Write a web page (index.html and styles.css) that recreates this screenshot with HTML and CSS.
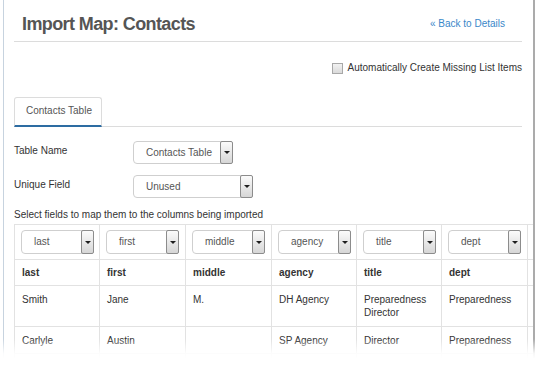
FILE: index.html
```html
<!DOCTYPE html>
<html>
<head>
<meta charset="utf-8">
<title>Import Map: Contacts</title>
<link rel="stylesheet" href="styles.css">
</head>
<body>
<div class="page">
  <div class="header">
    <h1 class="title">Import Map: Contacts</h1>
    <a class="back" href="#">« Back to Details</a>
  </div>
  <div class="options">
    <label class="check"><span class="box"></span>Automatically Create Missing List Items</label>
  </div>
  <div class="tabs"><div class="tab">Contacts Table</div></div>
  <div class="field first-field">
    <span class="label">Table Name</span>
    <div class="select w100"><span class="val">Contacts Table</span><span class="arrow"></span></div>
  </div>
  <div class="field second-field">
    <span class="label">Unique Field</span>
    <div class="select w120"><span class="val">Unused</span><span class="arrow"></span></div>
  </div>
  <div class="hint">Select fields to map them to the columns being imported</div>
  <div class="grid-wrap">
    <table class="grid">
      <colgroup>
        <col class="c85"><col class="c86"><col class="c86"><col class="c85"><col class="c85"><col class="c86"><col class="c86">
      </colgroup>
      <tr class="selrow">
        <td><div class="select cell-select"><span class="val">last</span><span class="arrow"></span></div></td>
        <td><div class="select cell-select"><span class="val">first</span><span class="arrow"></span></div></td>
        <td><div class="select cell-select"><span class="val">middle</span><span class="arrow"></span></div></td>
        <td><div class="select cell-select"><span class="val">agency</span><span class="arrow"></span></div></td>
        <td><div class="select cell-select"><span class="val">title</span><span class="arrow"></span></div></td>
        <td><div class="select cell-select"><span class="val">dept</span><span class="arrow"></span></div></td>
        <td></td>
      </tr>
      <tr class="headrow">
        <th>last</th><th>first</th><th>middle</th><th>agency</th><th>title</th><th>dept</th><th></th>
      </tr>
      <tr>
        <td>Smith</td><td>Jane</td><td>M.</td><td>DH Agency</td><td>Preparedness Director</td><td>Preparedness</td><td></td>
      </tr>
      <tr>
        <td>Carlyle</td><td>Austin</td><td></td><td>SP Agency</td><td>Director</td><td>Preparedness</td><td></td>
      </tr>
      <tr>
        <td>&nbsp;</td><td></td><td></td><td></td><td></td><td></td><td></td>
      </tr>
    </table>
  </div>
</div>
<div class="fade"></div>
</body>
</html>
```

FILE: styles.css
```css
html, body {
  margin: 0;
  padding: 0;
  background: #fff;
}
body {
  font-family: "Liberation Sans", Arial, sans-serif;
  font-size: 10px;
  color: #333;
  width: 536px;
  height: 365px;
  overflow: hidden;
  position: relative;
}
.page {
  box-sizing: border-box;
  margin-left: 3px;
  width: 532px;
  height: 365px;
  border-left: 1px solid #c7d3df;
  border-right: 2px solid #ababab;
  padding: 0 11px 0 10px;
  overflow: hidden;
}
.header {
  display: flex;
  justify-content: space-between;
  align-items: center;
  padding-top: 12px;
  padding-bottom: 5px;
  border-bottom: 1px solid #dcdcdc;
}
.title {
  margin: 0;
  padding-left: 8px;
  font-size: 18px;
  letter-spacing: -0.6px;
  line-height: 24px;
  font-weight: bold;
  color: #555;
}
.back {
  color: #3a87c9;
  text-decoration: none;
  line-height: 14px;
  margin-right: 17px;
}
.options {
  display: flex;
  justify-content: flex-end;
  margin-top: 19px;
}
.check {
  display: flex;
  align-items: center;
  gap: 4px;
  line-height: 14px;
}
.box {
  width: 9px;
  height: 9px;
  border: 1px solid #a8a8a8;
  background: linear-gradient(#f2f2f2, #dadada);
}
.tabs {
  display: flex;
  margin-top: 22px;
  border-bottom: 1px solid #dcdcdc;
}
.tab {
  margin-bottom: -1px;
  padding: 6px 9px 7px 11px;
  border: 1px solid #dcdcdc;
  border-bottom: 2px solid #2d6ca2;
  border-radius: 3px 3px 0 0;
  color: #555;
  line-height: 14px;
}
.field {
  display: flex;
  align-items: flex-start;
}
.first-field { margin-top: 14px; }
.second-field { margin-top: 11px; }
.label {
  width: 119px;
  padding-top: 3px;
  line-height: 14px;
  color: #333;
}
.select {
  box-sizing: border-box;
  display: flex;
  align-items: stretch;
  height: 23px;
  border: 1px solid #cfcfcf;
  border-radius: 4px;
  background: #fff;
  color: #555;
}
.w100 { width: 100px; }
.w120 { width: 120px; }
.val {
  flex: 1;
  padding-left: 12px;
  line-height: 21px;
  white-space: nowrap;
  overflow: hidden;
}
.arrow {
  width: 11px;
  margin: -1px -1px -1px 0;
  border: 1px solid #8c8c8c;
  border-radius: 2px;
  background: linear-gradient(#fbfbfb, #d6d6d6);
  display: flex;
  align-items: center;
  justify-content: center;
}
.arrow::after {
  content: "";
  border-left: 3px solid transparent;
  border-right: 3px solid transparent;
  border-top: 3px solid #1e1e1e;
}
.hint {
  margin-top: 10px;
  line-height: 14px;
}
.grid-wrap {
  margin-top: 2px;
  margin-right: -11px;
  overflow: hidden;
}
.grid {
  border-collapse: collapse;
  table-layout: fixed;
  width: 599px;
}
.c85 { width: 85px; }
.c86 { width: 86px; }
.grid td, .grid th {
  border: 1px solid #e2e2e2;
  padding: 7px 7px 6px;
  text-align: left;
  vertical-align: top;
  line-height: 13.5px;
}
.grid th {
  font-weight: bold;
  color: #333;
  padding: 6px 7px 5px;
}
.grid .selrow td {
  padding: 5px 5px 5px 6px;
}
.cell-select {
  width: 73px;
  height: 24px;
}
.cell-select .val {
  line-height: 22px;
}
.fade {
  position: absolute;
  left: 0;
  right: 0;
  bottom: 0;
  height: 26px;
  background: linear-gradient(rgba(255,255,255,0), rgba(255,255,255,0.9) 55%, #fff 75%);
}
```
